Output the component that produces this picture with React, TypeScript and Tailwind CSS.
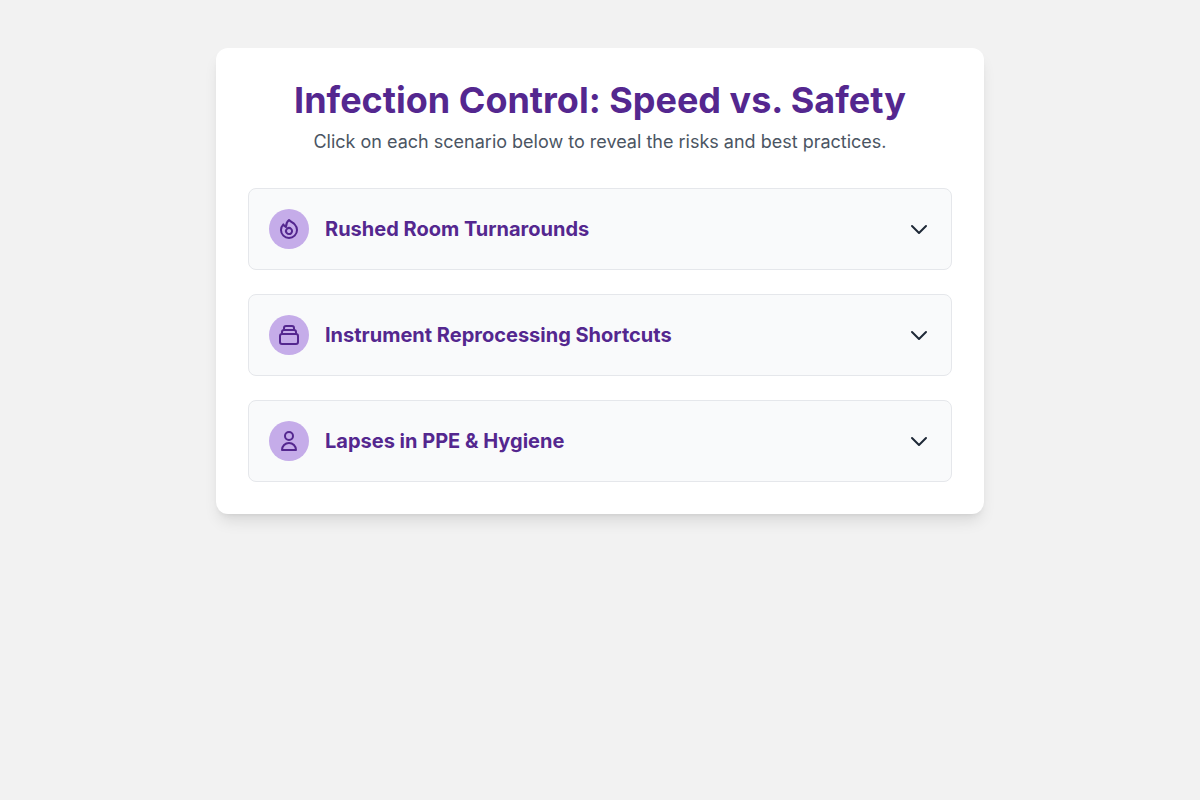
import React, { useState } from "react";

const scenarios = [
  {
    title: "Rushed Room Turnarounds",
    detail: "Skipping disinfectant contact time leaves pathogens behind. Follow the full wet time on every surface.",
    paths: [
      "M17.657 18.657A8 8 0 016.343 7.343S7 9 9 10c0-2 .5-5 2.986-7C14 5 16.09 5.777 17.656 7.343A7.975 7.975 0 0120 13a7.975 7.975 0 01-2.343 5.657z",
      "M9.879 16.121A3 3 0 1014.12 11.88a3 3 0 00-4.242 4.242z",
    ],
  },
  {
    title: "Instrument Reprocessing Shortcuts",
    detail: "Incomplete cleaning undermines sterilization. Complete and document every reprocessing step.",
    paths: [
      "M19 11H5m14 0a2 2 0 012 2v6a2 2 0 01-2 2H5a2 2 0 01-2-2v-6a2 2 0 012-2m14 0V9a2 2 0 00-2-2M5 11V9a2 2 0 012-2m0 0V5a2 2 0 012-2h6a2 2 0 012 2v2M7 7h10",
    ],
  },
  {
    title: "Lapses in PPE & Hygiene",
    detail: "Reused gloves and missed hand hygiene spread infection. Change PPE and clean hands between patients.",
    paths: ["M16 7a4 4 0 11-8 0 4 4 0 018 0zM12 14a7 7 0 00-7 7h14a7 7 0 00-7-7z"],
  },
];

function Icon({ paths }: { paths: string[] }) {
  return (
    <svg className="h-6 w-6" fill="none" viewBox="0 0 24 24" stroke="currentColor" strokeWidth={2} strokeLinecap="round" strokeLinejoin="round">
      {paths.map((d) => (
        <path key={d} d={d} />
      ))}
    </svg>
  );
}

export default function App() {
  const [open, setOpen] = useState<number | null>(null);
  return (
    <div className="min-h-screen bg-[#f2f2f2] px-4 py-12 font-['Inter',sans-serif] text-[#1f2937]">
      <main className="mx-auto max-w-3xl rounded-xl bg-white p-8 shadow-lg">
        <header className="mb-8 text-center">
          <h1 className="mb-2 text-4xl font-bold text-[#54278f]">Infection Control: Speed vs. Safety</h1>
          <p className="text-lg text-[#4b5563]">Click on each scenario below to reveal the risks and best practices.</p>
        </header>
        <div className="space-y-6">
          {scenarios.map((s, i) => (
            <section key={s.title} className="rounded-lg border border-[#e5e7eb] bg-[#f9fafb]">
              <button className="flex w-full cursor-pointer items-center justify-between p-5 text-left" onClick={() => setOpen(open === i ? null : i)}>
                <span className="flex items-center gap-4">
                  <span className="flex h-10 w-10 items-center justify-center rounded-full bg-[#c5ace9] text-[#54278f]">
                    <Icon paths={s.paths} />
                  </span>
                  <span className="text-xl font-bold text-[#54278f]">{s.title}</span>
                </span>
                <Icon paths={["M19 9l-7 7-7-7"]} />
              </button>
              {open === i && <p className="px-5 pb-5">{s.detail}</p>}
            </section>
          ))}
        </div>
      </main>
    </div>
  );
}
